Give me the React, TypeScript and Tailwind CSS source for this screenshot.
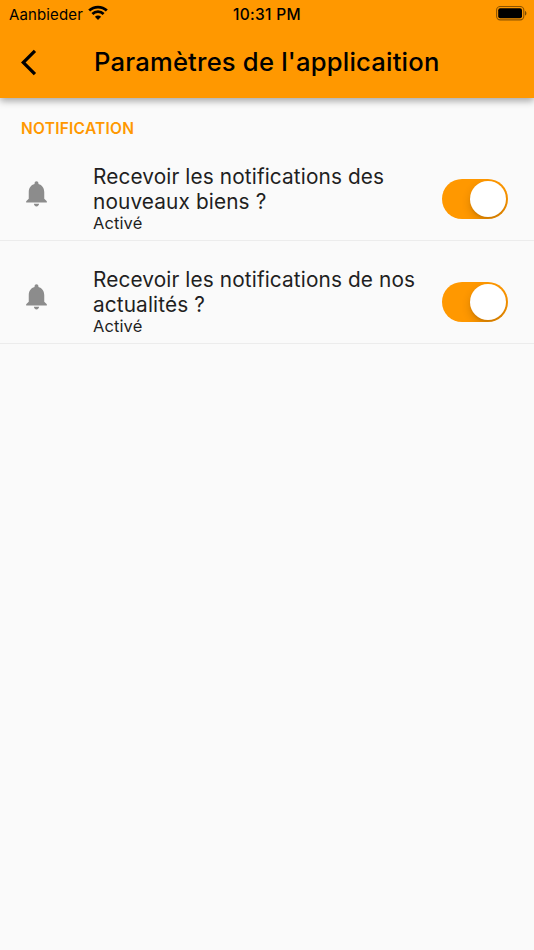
import { useState } from "react";

const settings = [
  { id: "listings", lines: ["Recevoir les notifications des", "nouveaux biens ?"] },
  { id: "news", lines: ["Recevoir les notifications de nos", "actualités ?"] },
];

function WifiIcon() {
  return (
    <svg className="ml-[5px] mt-[5px] h-[15px] w-[20px]" viewBox="0 0 20 15" fill="none" aria-hidden="true">
      <path d="M1.2 5.6C6.1.9 13.9.9 18.8 5.6" stroke="#000" strokeWidth="2.8" />
      <path d="M4.4 9c3.1-3.1 8.1-3.1 11.2 0" stroke="#000" strokeWidth="2.7" />
      <path d="M6.9 11.7c1.7-1.7 4.5-1.7 6.2 0L10 14.9z" fill="#000" />
    </svg>
  );
}

function BatteryIcon() {
  return (
    <svg className="h-[15px] w-[32px]" viewBox="0 0 32 15" fill="none" aria-hidden="true">
      <rect x="0.6" y="0.5" width="27.2" height="13.4" rx="3.6" stroke="#000" strokeOpacity="0.45" strokeWidth="1.1" />
      <rect x="2.2" y="2.2" width="23.8" height="10" rx="2" fill="#000" />
      <path d="M29 5c1.9.6 1.9 4 0 4.6z" fill="#000" fillOpacity="0.5" />
    </svg>
  );
}

function BellIcon() {
  return (
    <svg className="size-[31px]" viewBox="0 0 24 24" fill="#8c8c8c" aria-hidden="true">
      <path d="M12 22c1.1 0 2-.9 2-2h-4c0 1.1.89 2 2 2zm6-6v-5c0-3.07-1.64-5.64-4.5-6.32V4c0-.83-.67-1.5-1.5-1.5s-1.5.67-1.5 1.5v.68C7.63 5.36 6 7.92 6 11v5l-2 2v1h16v-1l-2-2z" />
    </svg>
  );
}

function Toggle({ on, label, onChange }: { on: boolean; label: string; onChange: () => void }) {
  return (
    <button
      type="button"
      role="switch"
      aria-checked={on}
      aria-label={label}
      onClick={onChange}
      className={`flex h-[40px] w-[66px] items-center overflow-hidden rounded-full px-[2px] ${
        on ? "justify-end bg-[#ff9800]" : "justify-start bg-[#dddddd]"
      }`}
    >
      <span className="size-[36px] rounded-full bg-white shadow-[0_4px_10px_rgba(0,0,0,0.16),0_2px_2px_rgba(0,0,0,0.08)]" />
    </button>
  );
}

export default function App() {
  const [enabled, setEnabled] = useState<Record<string, boolean>>({ listings: true, news: true });

  const toggle = (id: string) => setEnabled((prev) => ({ ...prev, [id]: !prev[id] }));

  return (
    <div className="h-[950px] w-[534px] overflow-hidden bg-[#fafafa] font-['Inter',sans-serif]">
      <header className="h-[98px] bg-[#ff9800] text-black shadow-[0_3px_7px_rgba(0,0,0,0.34)]">
        {/* Status bar */}
        <div className="grid h-[26px] grid-cols-3 text-[15px] leading-[29px]">
          <div className="flex pl-[9px]">
            <span className="tracking-[0.13px]">Aanbieder</span>
            <WifiIcon />
          </div>
          <span className="text-center text-[15.5px] font-medium tracking-[0.3px]">10:31 PM</span>
          <div className="flex justify-end pr-[6px] pt-[6px]">
            <BatteryIcon />
          </div>
        </div>

        <div className="flex h-[72px] items-center pl-[20.7px]">
          <button type="button" aria-label="Retour" className="mr-[42.3px]">
            <svg className="size-[31px]" viewBox="0 0 24 24" fill="#000" aria-hidden="true">
              <path d="M11.67 3.87L9.9 2.1 0 12l9.9 9.9 1.77-1.77L3.54 12z" />
            </svg>
          </button>
          <h1 className="whitespace-nowrap text-[25.6px] font-medium tracking-[0.2px]">
            Paramètres de l'applicaition
          </h1>
        </div>
      </header>

      <main>
        <h2 className="h-[40px] pl-[21px] pt-[20px] text-[15.5px] font-semibold leading-[21px] tracking-[0.25px] text-[#ff9800]">
          NOTIFICATION
        </h2>

        {settings.map((item) => (
          <section key={item.id} className="flex h-[103px] items-start border-b border-[#ececec]">
            <div className="ml-[20.7px] mt-[40px] w-[72.3px]">
              <BellIcon />
            </div>
            <div className="w-[349px] whitespace-nowrap pt-[27px] text-[#1f1f1f]">
              <p className="text-[20.8px] leading-[24.5px] tracking-[0.12px]">
                {item.lines[0]}
                <br />
                {item.lines[1]}
              </p>
              <p className="-mt-px text-[16.5px] leading-[20px] tracking-[0.1px]">
                {enabled[item.id] ? "Activé" : "Désactivé"}
              </p>
            </div>
            <div className="mt-[41px]">
              <Toggle on={enabled[item.id]} label={item.lines.join(" ")} onChange={() => toggle(item.id)} />
            </div>
          </section>
        ))}
      </main>
    </div>
  );
}
